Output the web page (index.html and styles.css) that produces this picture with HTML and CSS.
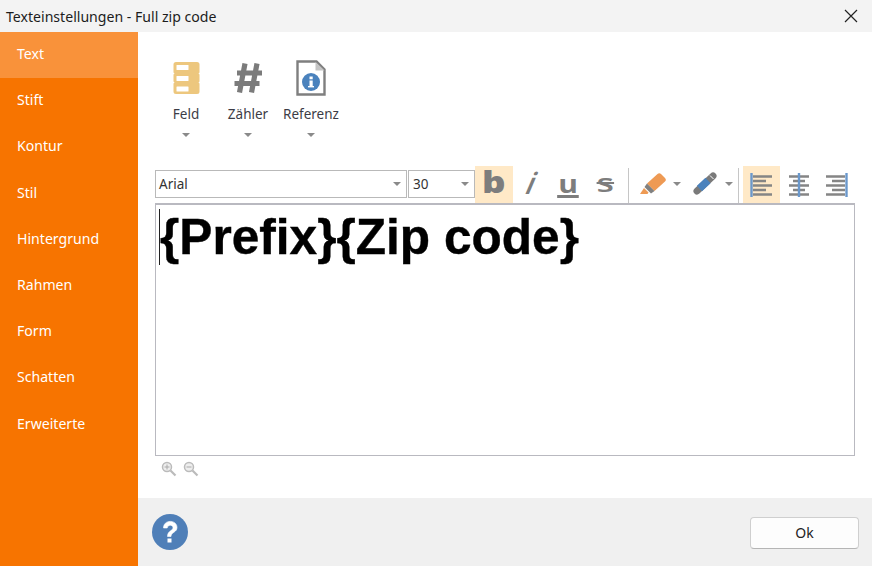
FILE: index.html
```html
<!DOCTYPE html>
<html lang="de">
<head>
<meta charset="utf-8">
<title>Texteinstellungen - Full zip code</title>
<link rel="stylesheet" href="styles.css">
</head>
<body>
<div class="dialog">
  <header class="titlebar">
    <span class="title">Texteinstellungen - Full zip code</span>
    <svg class="close" width="14" height="14" viewBox="0 0 14 14"><path d="M1 1l12 12M13 1L1 13" stroke="#222" stroke-width="1.2" fill="none"/></svg>
  </header>
  <div class="body">
    <nav class="sidebar">
      <div class="nav-item active">Text</div>
      <div class="nav-item">Stift</div>
      <div class="nav-item">Kontur</div>
      <div class="nav-item">Stil</div>
      <div class="nav-item">Hintergrund</div>
      <div class="nav-item">Rahmen</div>
      <div class="nav-item">Form</div>
      <div class="nav-item">Schatten</div>
      <div class="nav-item">Erweiterte</div>
    </nav>
    <main class="main">
      <div class="content">
        <div class="ribbon">
          <div class="ribbon-btn btn-feld">
            <div class="icon-box"><svg width="27" height="32" viewBox="0 0 27 32"><path d="M3 0h21a2.500 2.500 0 0 1 2.500 2.500v8l-1 1 1 1v7l-1 1 1 1v8a2.500 2.500 0 0 1-2.500 2.500H3A2.500 2.500 0 0 1 .5 29.500v-8l1-1-1-1v-7l1-1-1-1v-8A2.500 2.500 0 0 1 3 0z" fill="#edc77e"/><rect x="3.500" y="3" width="12" height="5" rx=".5" fill="#fff"/><rect x="3.500" y="14" width="12" height="5" rx=".5" fill="#fff"/><rect x="3.500" y="24.500" width="12" height="5" rx=".5" fill="#fff"/></svg></div>
            <span class="ribbon-label">Feld</span>
            <span class="caret"></span>
          </div>
          <div class="ribbon-btn btn-zaehler">
            <div class="icon-box"><svg width="30" height="32" viewBox="0 0 30 32"><path d="M12 1.500 6.500 30.500M24 1.500 18.500 30.500M4 11h25M1.500 21.500h25" stroke="#7b7b7b" stroke-width="5.200" fill="none"/></svg></div>
            <span class="ribbon-label">Zähler</span>
            <span class="caret"></span>
          </div>
          <div class="ribbon-btn btn-ref">
            <div class="icon-box"><svg width="32" height="36" viewBox="0 0 32 36"><path d="M2.500 1.500h19l8 8v25h-27z" fill="#fff" stroke="#7f7f7f" stroke-width="2.400"/><path d="M20.500 2v8.500h9z" fill="#c4c4c4"/><circle cx="16" cy="22" r="9" fill="#4a82bd"/><rect x="14.500" y="20.500" width="3.200" height="6.500" fill="#fff"/><rect x="14.500" y="16.500" width="3.200" height="2.800" fill="#fff"/><rect x="13" y="26" width="6" height="1.400" fill="#fff"/></svg></div>
            <span class="ribbon-label">Referenz</span>
            <span class="caret"></span>
          </div>
        </div>
        <div class="format-bar">
          <div class="select select-font"><span>Arial</span><i class="caret"></i></div>
          <div class="select select-size"><span>30</span><i class="caret"></i></div>
          <div class="tool tool-first on"><span class="glyph g-b">b</span></div>
          <div class="tool"><span class="glyph g-i">i</span></div>
          <div class="tool"><span class="glyph g-u">u</span></div>
          <div class="tool"><span class="glyph g-s">s</span></div>
          <div class="sep"></div>
          <div class="tool-drop">
            <svg width="28" height="26" viewBox="0 0 28 26"><path d="M9 12.500 19.500 3a2.500 2.500 0 0 1 3.500 0l4 4a2.500 2.500 0 0 1 0 3.500L16.500 20z" fill="#ee9a54"/><path d="M9 12.500 16.500 20l-3.500 2.500L6.500 16z" fill="#808080"/><path d="M6 17l4.500 4.500-1 1.500H2z" fill="#ee9a54"/></svg>
            <i class="caret"></i>
          </div>
          <div class="tool-drop">
            <svg width="28" height="26" viewBox="0 0 28 26"><path d="M7 20 23 5" stroke="#7a7a7a" stroke-width="7" stroke-linecap="round" fill="none"/><path d="M9.500 17.500 18 9.500" stroke="#4a82bd" stroke-width="7.500" fill="none"/><path d="M20 4.500l3.500 3.500" stroke="#fff" stroke-width="1" fill="none"/></svg>
            <i class="caret"></i>
          </div>
          <div class="sep sep-end"></div>
          <div class="tool on">
            <svg width="24" height="24" viewBox="0 0 24 24"><path d="M1.500 0v24" stroke="#6a98cc" stroke-width="2.400"/><path d="M3 3.500h19M3 8h13M3 12.500h19M3 17h13M3 21.500h19" stroke="#858585" stroke-width="2.400"/></svg>
          </div>
          <div class="tool">
            <svg width="24" height="24" viewBox="0 0 24 24"><path d="M2 3.500h20M6 8h12M2 12.500h20M6 17h12M2 21.500h20" stroke="#858585" stroke-width="2.400"/><path d="M12 0v24" stroke="#6a98cc" stroke-width="2.400"/></svg>
          </div>
          <div class="tool">
            <svg width="24" height="24" viewBox="0 0 24 24"><path d="M22.500 0v24" stroke="#6a98cc" stroke-width="2.400"/><path d="M2 3.500h19M8 8h13M2 12.500h19M8 17h13M2 21.500h19" stroke="#858585" stroke-width="2.400"/></svg>
          </div>
        </div>
        <div class="editor">
          <span class="cursor"></span><span class="editor-text">{Prefix}{Zip code}</span>
        </div>
        <div class="zoom-row">
          <svg width="16" height="16" viewBox="0 0 16 16"><circle cx="6" cy="6" r="4.500" fill="#eee" stroke="#bbb" stroke-width="1.500"/><path d="M3.500 6h5M6 3.500v5" stroke="#aaa"/><path d="M9.500 9.500l5 5" stroke="#bbb" stroke-width="2.200"/></svg>
          <svg width="16" height="16" viewBox="0 0 16 16"><circle cx="6" cy="6" r="4.500" fill="#eee" stroke="#bbb" stroke-width="1.500"/><path d="M3.500 6h5" stroke="#aaa"/><path d="M9.500 9.500l5 5" stroke="#bbb" stroke-width="2.200"/></svg>
        </div>
      </div>
      <footer class="footer">
        <svg width="36" height="36" viewBox="0 0 36 36"><circle cx="18" cy="18" r="18" fill="#4f7fb8"/><path d="M11.500 14c0-9 13.500-8.500 13.500-.5 0 5-6 4.500-6 9h-3.500c0-6 5.500-5.500 5.500-8.700 0-3.500-5.500-3.500-5.800.2z" fill="#fff" stroke="#fff" stroke-width=".6"/><rect x="15.500" y="24.500" width="4" height="4" fill="#fff"/></svg>
        <button class="ok" type="button">Ok</button>
      </footer>
    </main>
  </div>
</div>
</body>
</html>
```

FILE: styles.css
```css
* { box-sizing: border-box; }
html, body { margin: 0; padding: 0; }
body { width: 872px; height: 566px; overflow: hidden; background: #fff; font-family: "Noto Sans", "Open Sans", sans-serif; color: #222; }
.dialog { display: flex; flex-direction: column; height: 566px; }
.titlebar { height: 32px; flex: none; background: #f3f3f3; display: flex; align-items: center; justify-content: space-between; padding: 0 14px 0 6px; }
.title { font-size: 14.100px; color: #1c1c1c; }
.body { flex: 1; display: flex; min-height: 0; }
.sidebar { width: 138px; flex: none; background: #f77400; display: flex; flex-direction: column; }
.nav-item { height: 46.200px; padding: 0 0 3px 17px; display: flex; align-items: center; color: #fff; font-size: 14.100px; }
.nav-item.active { background: #f9923a; }
.main { flex: 1; display: flex; flex-direction: column; min-width: 0; }
.content { flex: 1; padding: 24px 17px 0; }
.ribbon { display: flex; height: 90px; padding-left: 6px; }
.ribbon-btn { display: flex; flex-direction: column; align-items: center; }
.icon-box { height: 44px; display: flex; align-items: center; justify-content: center; flex: none; }
.btn-feld { width: 50px; }
.btn-zaehler { width: 62px; margin-left: 6px; }
.btn-ref { width: 60px; margin-left: 2px; }
.ribbon-label { font-size: 13.500px; line-height: 18px; margin-top: 5px; color: #3c3c46; }
.caret { display: block; width: 0; height: 0; border: 4px solid transparent; border-top: 4px solid #8a8a8a; border-bottom: 0; }
.ribbon-btn .caret { margin-top: 10px; }
.format-bar { display: flex; align-items: flex-start; height: 37px; margin-top: 20px; }
.select { height: 28px; margin-top: 4px; background: #fff; border: 1px solid #b9b9b9; display: flex; align-items: center; justify-content: space-between; padding: 0 5px 0 3px; font-size: 13.500px; color: #333; }
.select-font { width: 252px; }
.select-size { width: 67px; margin-left: 1px; padding-left: 4px; }
.tool { width: 37px; height: 37px; display: flex; align-items: center; justify-content: center; }
.tool-first { width: 38px; }
.tool.on { background: #ffe9c7; }
.glyph { display: inline-block; font-family: "Open Sans", sans-serif; font-weight: 700; color: #7d7d7d; line-height: 1; }
.g-b { font-size: 30px; font-weight: 800; margin-top: -5px; transform: scaleX(1.22); }
.g-i { font-size: 30px; font-weight: 600; font-style: italic; margin-top: -3px; transform: skewX(-12deg); }
.g-u { font-size: 25px; transform: scaleX(1.2); border-bottom: 3px solid #7d7d7d; line-height: 24px; margin-top: -1px; padding: 0 1px; }
.g-s { font-size: 26px; font-weight: 600; text-decoration: line-through; text-decoration-thickness: 2px; margin-top: -6px; transform: scaleX(1.38); }
.sep { width: 1px; height: 35px; margin: 2px 5px 0 4px; background: #c6c6c6; }
.sep-end { margin: 2px 4px 0 0; }
.tool-drop { width: 52px; height: 37px; display: flex; align-items: center; gap: 7px; padding: 0 0 2px 4px; }
.editor { height: 253px; width: 700px; background: #fff; border: 1px solid #b9b9c0; border-top-width: 2px; padding: 4px 3px; display: flex; align-items: flex-start; position: relative; }
.cursor { position: absolute; left: 3px; top: 4px; width: 1px; height: 56px; background: #222; }
.editor-text { font-family: "Liberation Sans", Arial, sans-serif; font-weight: 700; font-size: 49.600px; line-height: 56px; color: #000; margin-left: 1px; -webkit-text-stroke: 0.4px #000; }
.zoom-row { display: flex; gap: 6px; padding: 5px 0 0 6px; }
.footer { height: 68px; flex: none; background: #f0f0f0; display: flex; align-items: center; justify-content: space-between; padding: 0 13px 0 14px; }
.ok { width: 109px; height: 32px; margin-top: 1px; background: #fdfdfd; border: 1px solid #cfcfcf; border-bottom-color: #b5b5b5; border-radius: 4px; font-family: "Noto Sans", sans-serif; font-size: 14px; color: #222; padding: 0; }
```
